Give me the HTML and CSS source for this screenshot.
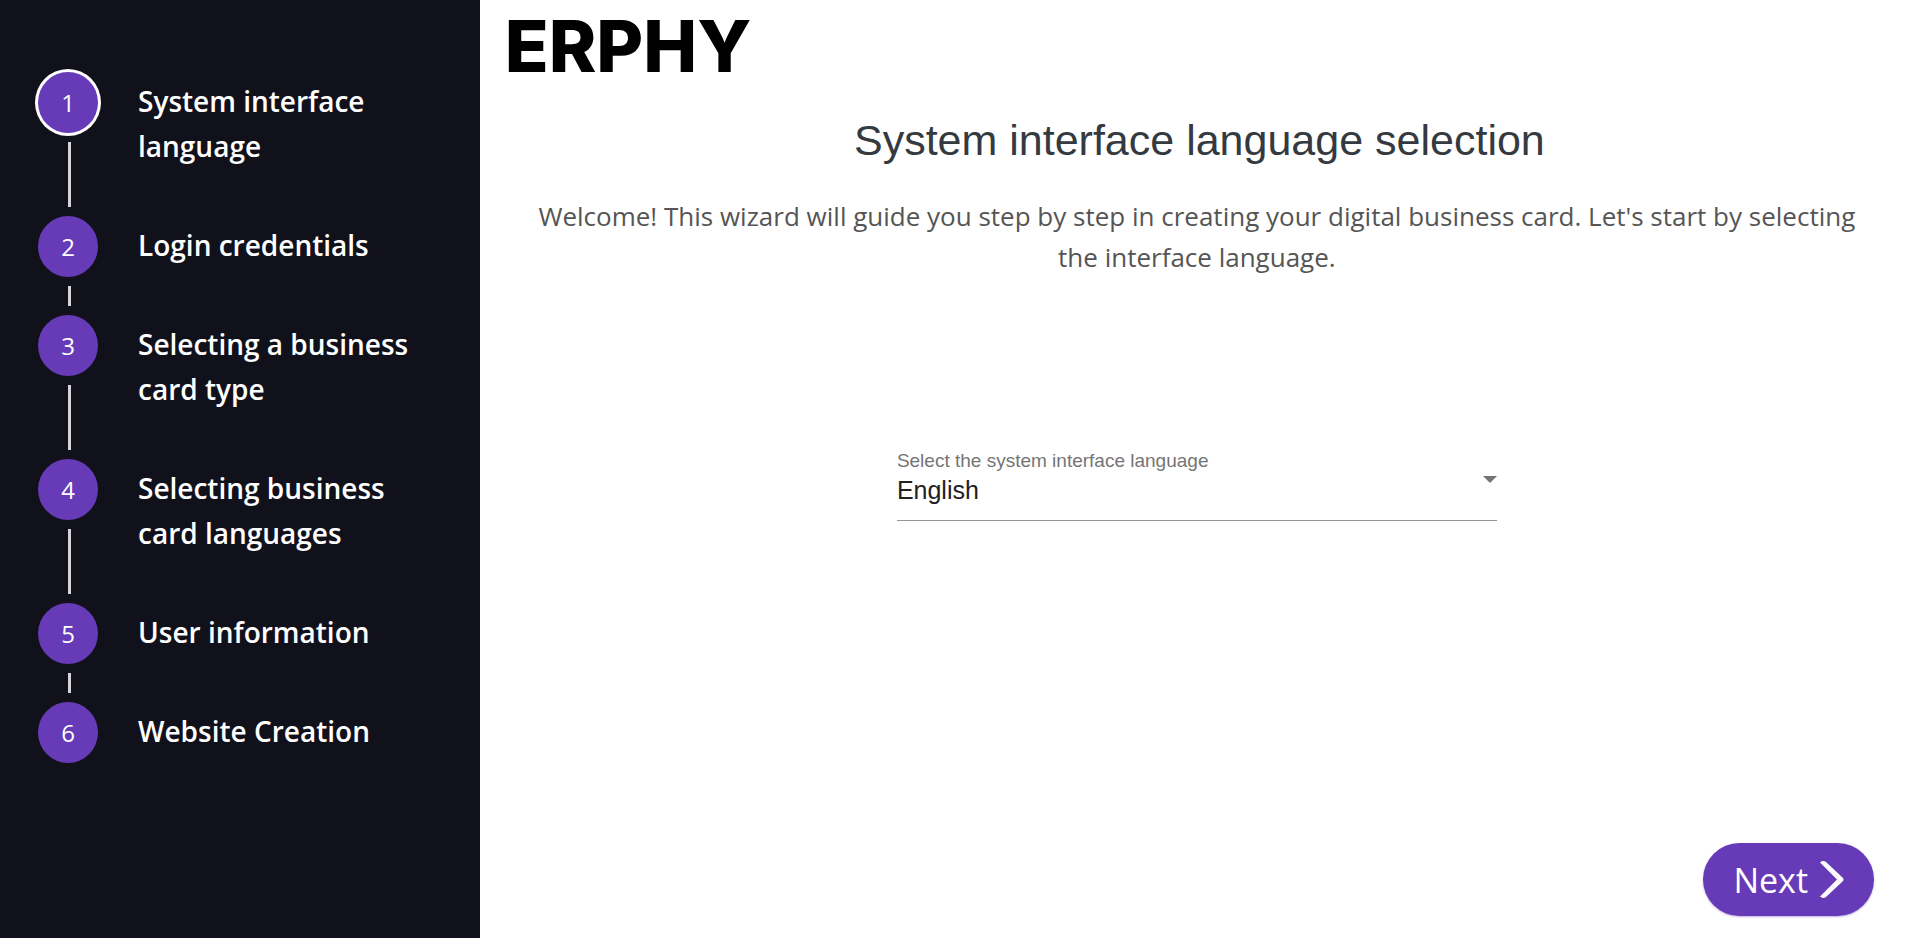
FILE: index.html
```html
<!DOCTYPE html>
<html lang="en">
  <head>
    <meta charset="UTF-8" />
    <meta name="viewport" content="width=device-width, initial-scale=1.0" />
    <title>ERPHY</title>
    <link rel="stylesheet" href="styles.css">
  </head>
  <body>
    <aside class="sidebar">
      <ol class="steps">
        <li class="step active">
          <div class="marker"><span class="circle">1</span></div>
          <span class="step-title">System interface language</span>
        </li>
        <li class="step">
          <div class="marker"><span class="circle">2</span></div>
          <span class="step-title">Login credentials</span>
        </li>
        <li class="step">
          <div class="marker"><span class="circle">3</span></div>
          <span class="step-title">Selecting a business card type</span>
        </li>
        <li class="step">
          <div class="marker"><span class="circle">4</span></div>
          <span class="step-title">Selecting business card languages</span>
        </li>
        <li class="step">
          <div class="marker"><span class="circle">5</span></div>
          <span class="step-title">User information</span>
        </li>
        <li class="step">
          <div class="marker"><span class="circle">6</span></div>
          <span class="step-title">Website Creation</span>
        </li>
      </ol>
    </aside>

    <main class="content">
      <div class="logo">ERPHY</div>
      <h1 class="title">System interface language selection</h1>
      <div class="wizard">
        <p class="intro">
          Welcome! This wizard will guide you step by step in creating your
          digital business card. Let's start by selecting the interface language.
        </p>

        <form class="field">
          <label class="label" for="language">Select the system interface language</label>
          <select class="select" id="language">
            <option value="en" selected>English</option>
          </select>
          <svg class="arrow" width="14" height="7" viewBox="0 0 14 7" aria-hidden="true">
            <path d="M0 0h14L7 7z" fill="#757575" />
          </svg>
        </form>
      </div>

      <button class="next" type="button">
        Next
        <svg width="24" height="37" viewBox="0 0 24 37" aria-hidden="true">
          <path d="M0 1.500Q3-1 6 1L23 17Q24 18.500 23 20L6 36Q3 38 0 35.500L17 18.500z" fill="#fff" />
        </svg>
      </button>
    </main>
  </body>
</html>
```

FILE: styles.css
```css
* {
  padding: 0;
  margin: 0;
  box-sizing: border-box;
}
body {
  display: flex;
  min-height: 100vh;
  font-family: "Segoe UI", "Open Sans", sans-serif;
  background: #fff;
}

/* sidebar */
.sidebar {
  width: 25%;
  padding: 72px 38px 40px;
  background: #11111b;
  color: #fff;
}
.steps {
  list-style: none;
}
.step {
  display: flex;
  gap: 40px;
}
.marker {
  display: flex;
  flex-direction: column;
  gap: 9px;
  width: 60px;
  flex-shrink: 0;
  padding-bottom: 9px;
}
.circle {
  width: 60px;
  height: 61px;
  border-radius: 50%;
  background: #673ab7;
  font-size: 24px;
  line-height: 62px;
  text-align: center;
}
.active .circle {
  box-shadow: 0 0 0 3px #fff;
}
.step:not(:last-child) .marker::after {
  content: "";
  flex: 1;
  width: 3px;
  margin-left: 30px;
  background: #d5d5d8;
}
.step-title {
  padding: 7px 0 47px;
  font-size: 28px;
  font-weight: 600;
  line-height: 45px;
}

/* content */
.content {
  flex: 1;
  display: flex;
  flex-direction: column;
  padding: 16px 45px 22px;
}
.logo {
  align-self: flex-start;
  margin-left: -20px;
  font-family: Inter, sans-serif;
  font-size: 72px;
  font-weight: 800;
  line-height: 60px;
  color: #000;
}
.title {
  margin-top: 36px;
  font-family: "Liberation Sans", Arial, sans-serif;
  font-size: 43px;
  font-weight: 400;
  line-height: 56px;
  text-align: center;
  color: #343a40;
}
.wizard {
  padding: 28px 5px 0 0;
}
.intro {
  font-size: 26px;
  line-height: 41px;
  text-align: center;
  color: #555;
}
.field {
  position: relative;
  width: 100%;
  max-width: 600px;
  margin: 172px auto 40px;
  font-family: "Liberation Sans", Arial, sans-serif;
  border-bottom: 1px solid #949494;
}
.label {
  display: block;
  font-size: 19px;
  line-height: 22px;
  color: #757575;
}
.select {
  display: block;
  width: 100%;
  height: 48px;
  padding-bottom: 12px;
  appearance: none;
  border: none;
  outline: none;
  background: transparent;
  font-family: inherit;
  font-size: 25px;
  color: #212121;
}
.arrow {
  position: absolute;
  top: 26px;
  right: 0;
  pointer-events: none;
}
.next {
  display: flex;
  align-items: center;
  gap: 12px;
  align-self: flex-end;
  height: 73px;
  margin-top: auto;
  padding: 0 30px;
  border: none;
  border-radius: 37px;
  background: #673ab7;
  box-shadow: 0 1px 2px rgba(103, 58, 183, 0.4);
  font-family: inherit;
  font-size: 34px;
  color: #fff;
}
```
